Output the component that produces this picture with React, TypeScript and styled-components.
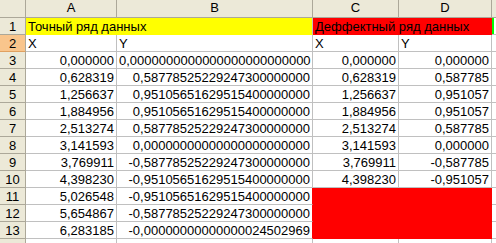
import styled, { createGlobalStyle } from "styled-components";

const GlobalStyle = createGlobalStyle`
  html, body {
    margin: 0;
    padding: 0;
    background: #ffffff;
    overflow: hidden;
  }
  body {
    font-family: "Liberation Sans", Arial, sans-serif;
    font-size: 13px;
    color: #000000;
  }
`;

const GRID = "#C0C0C0";
const HEAD_BG = "#ECE9D8";
const HEAD_LINE = "#ACA899";

const Sheet = styled.div`
  display: grid;
  grid-template-columns: 26px 91px 196px 86px 93px 1fr;
  grid-template-rows: 18px;
  grid-auto-rows: 17px;
  width: 496px;
  height: 243px;
  overflow: hidden;
`;

const Corner = styled.div`
  background: ${HEAD_BG};
  border-right: 1px solid ${HEAD_LINE};
  border-bottom: 1px solid ${HEAD_LINE};
  box-sizing: border-box;
`;

const ColHead = styled.div`
  background: ${HEAD_BG};
  border-right: 1px solid ${HEAD_LINE};
  border-bottom: 1px solid ${HEAD_LINE};
  box-sizing: border-box;
  text-align: center;
  line-height: 16px;
`;

const RowHead = styled.div<{ $selected?: boolean }>`
  background: ${({ $selected }) => ($selected ? "#F9C58C" : HEAD_BG)};
  border-right: 1px solid ${HEAD_LINE};
  border-bottom: 1px solid ${({ $selected }) => ($selected ? "#E0A060" : HEAD_LINE)};
  box-sizing: border-box;
  text-align: center;
  line-height: 16px;
  padding-top: 1px;
`;

const Cell = styled.div<{
  $num?: boolean;
  $fill?: string;
  $span?: number;
  $edge?: string;
  $stripe?: string;
}>`
  grid-column: span ${({ $span }) => $span ?? 1};
  box-sizing: border-box;
  background: ${({ $fill }) => $fill ?? "#ffffff"};
  border-right: 1px solid ${({ $fill, $edge }) => $edge ?? $fill ?? GRID};
  border-bottom: 1px solid ${({ $fill }) => $fill ?? GRID};
  box-shadow: ${({ $stripe }) => ($stripe ? `inset 2px 0 0 ${$stripe}` : "none")};
  text-align: ${({ $num }) => ($num ? "right" : "left")};
  padding: 1px 2px 0 2px;
  line-height: 16px;
  white-space: nowrap;
  overflow: hidden;
`;

const RED = "#FF0000";
const YELLOW = "#FFFF00";

type DataRow = [string, string, string | null, string | null];

const data: DataRow[] = [
  ["0,000000", "0,0000000000000000000000000", "0,000000", "0,000000"],
  ["0,628319", "0,58778525229247300000000", "0,628319", "0,587785"],
  ["1,256637", "0,95105651629515400000000", "1,256637", "0,951057"],
  ["1,884956", "0,95105651629515400000000", "1,884956", "0,951057"],
  ["2,513274", "0,58778525229247300000000", "2,513274", "0,587785"],
  ["3,141593", "0,00000000000000000000000", "3,141593", "0,000000"],
  ["3,769911", "-0,58778525229247300000000", "3,769911", "-0,587785"],
  ["4,398230", "-0,95105651629515400000000", "4,398230", "-0,951057"],
  ["5,026548", "-0,95105651629515400000000", null, null],
  ["5,654867", "-0,58778525229247300000000", null, null],
  ["6,283185", "-0,00000000000000024502969", null, null],
];

export default function App() {
  return (
    <>
      <GlobalStyle />
      <Sheet>
        <Corner />
        <ColHead>A</ColHead>
        <ColHead>B</ColHead>
        <ColHead>C</ColHead>
        <ColHead>D</ColHead>
        <ColHead />

        <RowHead>1</RowHead>
        <Cell $span={2} $fill={YELLOW} $edge={GRID}>
          Точный ряд данных
        </Cell>
        <Cell $span={2} $fill={RED}>
          Деффектный ряд данных
        </Cell>
        <Cell $stripe="#00FF00" />

        <RowHead $selected>2</RowHead>
        <Cell>X</Cell>
        <Cell>Y</Cell>
        <Cell>X</Cell>
        <Cell>Y</Cell>
        <Cell />

        {data.map(([a, b, c, d], i) => {
          const gap = c === null;
          return (
            <div key={i} style={{ display: "contents" }}>
              <RowHead>{i + 3}</RowHead>
              <Cell $num>{a}</Cell>
              <Cell $num $edge={gap ? RED : undefined}>
                {b}
              </Cell>
              <Cell $num $fill={gap ? RED : undefined}>
                {c}
              </Cell>
              <Cell $num $fill={gap ? RED : undefined}>
                {d}
              </Cell>
              <Cell />
            </div>
          );
        })}

        {/* row 14 is only a sliver at the bottom edge */}
        <RowHead />
        <Cell />
        <Cell />
        <Cell />
        <Cell />
        <Cell />
      </Sheet>
    </>
  );
}
